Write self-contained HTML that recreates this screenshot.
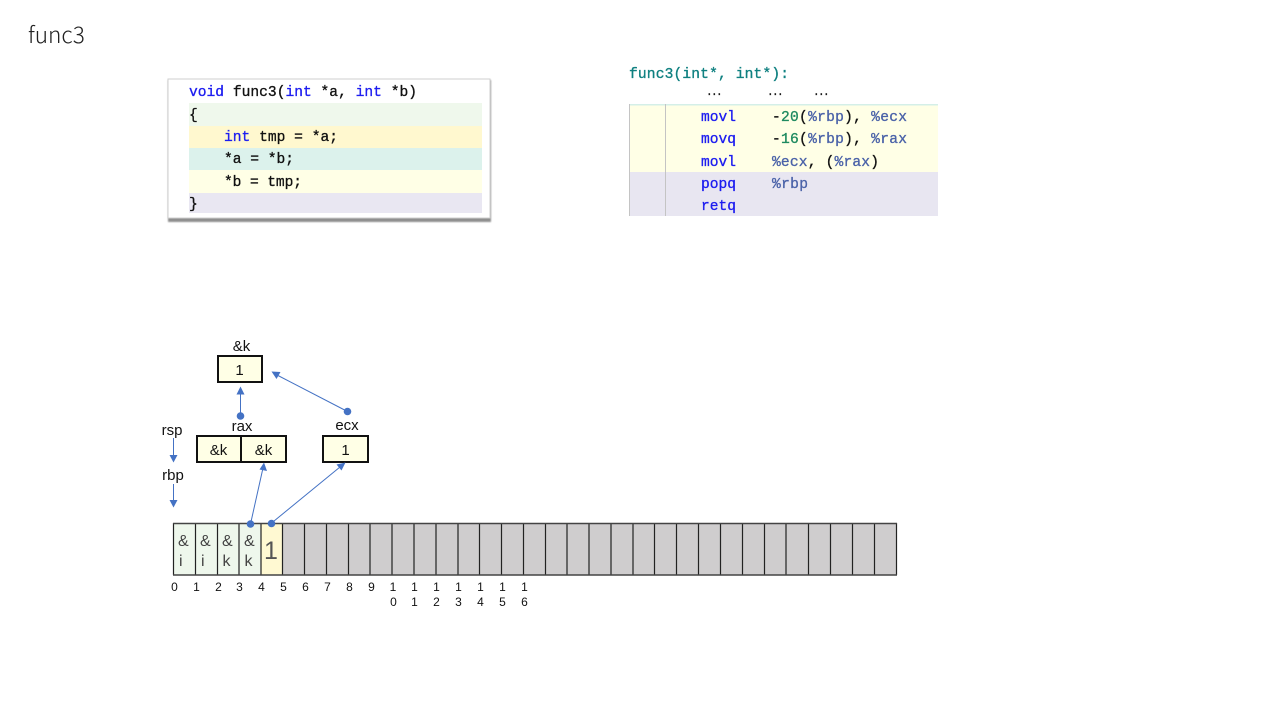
<!DOCTYPE html>
<html lang="en"><head><meta charset="utf-8"><title>func3</title>
<style>
html,body{margin:0;padding:0;background:#fff;width:1280px;height:720px;overflow:hidden}
svg{position:absolute;left:0;top:0;display:block}
.m{font-family:"Liberation Mono","DejaVu Sans Mono",monospace;font-size:14.6px;font-weight:400;stroke-width:.32;white-space:pre;filter:blur(.35px)}
.k{fill:#111;stroke:#111}
.b{fill:#1c1cf0;stroke:#1c1cf0}
.r{fill:#4a62a8;stroke:#4a62a8}
.g{fill:#1f8a60;stroke:#1f8a60}
.t{fill:#0f8080;stroke:#0f8080}
.s{font-family:"Liberation Sans","Noto Sans CJK SC",sans-serif;fill:#111}
.c{font-family:"Liberation Sans",sans-serif;fill:#444;font-size:16px}
.n{font-family:"Liberation Sans",sans-serif;fill:#111;font-size:12px;text-anchor:middle}
.l{font-size:15px;text-anchor:middle}
.a{stroke:#4472c4;stroke-width:1;fill:none}
.h{fill:#4472c4}
</style></head><body>
<svg width="1280" height="720" viewBox="0 0 1280 720" xmlns="http://www.w3.org/2000/svg">
<text x="28" y="43" style="font-family:'Noto Sans CJK SC','Liberation Sans',sans-serif;font-size:22.6px;font-weight:300;fill:#222">func3</text>

<!-- C code panel -->
<rect x="168" y="80" width="323" height="142" fill="#8f8f8f" style="filter:blur(.9px)"/>
<rect x="168" y="79" width="322" height="139" fill="#fff" stroke="#cfcfcf" stroke-width="1"/>
<rect x="189" y="103" width="293" height="23" fill="#eff8ec"/>
<rect x="189" y="126" width="293" height="22" fill="#fff8cf"/>
<rect x="189" y="148" width="293" height="22" fill="#dcf2ec"/>
<rect x="189" y="170" width="293" height="23" fill="#ffffe6"/>
<rect x="189" y="193" width="293" height="20" fill="#e9e7f2"/>
<g class="m">
<text y="96" textLength="228" x="189"><tspan class="b">void</tspan><tspan class="k"> func3(</tspan><tspan class="b">int</tspan><tspan class="k"> *a, </tspan><tspan class="b">int</tspan><tspan class="k"> *b)</tspan></text>
<text y="119" x="189" class="k">{</text>
<text y="141" x="224" textLength="114"><tspan class="b">int</tspan><tspan class="k"> tmp = *a;</tspan></text>
<text y="163" x="224" class="k" textLength="70">*a = *b;</text>
<text y="186" x="224" class="k" textLength="78">*b = tmp;</text>
<text y="208" x="189" class="k">}</text>
</g>

<!-- asm panel -->
<rect x="629" y="104" width="309" height="68" fill="#ffffe6"/>
<rect x="629" y="172" width="309" height="44" fill="#e8e6f1"/>
<rect x="629" y="104" width="309" height="1.5" fill="#d4efe8"/>
<rect x="629" y="104" width="1" height="112" fill="#c4c4c4"/>
<rect x="665" y="104" width="1" height="112" fill="#c4c4c4"/>
<g class="m">
<text x="629" y="78" class="t" textLength="160">func3(int*, int*):</text>
<text x="706 711 716" y="95" class="k" style="font-size:11px">...</text>
<text x="767 772 777" y="95" class="k" style="font-size:11px">...</text>
<text x="813 818 823" y="95" class="k" style="font-size:11px">...</text>
<text x="701" y="121" class="b" textLength="35">movl</text>
<text x="701" y="143" class="b" textLength="35">movq</text>
<text x="701" y="166" class="b" textLength="35">movl</text>
<text x="701" y="188" class="b" textLength="35">popq</text>
<text x="701" y="210" class="b" textLength="35">retq</text>
<text x="772" y="121" textLength="135"><tspan class="k">-</tspan><tspan class="g">20</tspan><tspan class="k">(</tspan><tspan class="r">%rbp</tspan><tspan class="k">), </tspan><tspan class="r">%ecx</tspan></text>
<text x="772" y="143" textLength="135"><tspan class="k">-</tspan><tspan class="g">16</tspan><tspan class="k">(</tspan><tspan class="r">%rbp</tspan><tspan class="k">), </tspan><tspan class="r">%rax</tspan></text>
<text x="772" y="166" textLength="107"><tspan class="r">%ecx</tspan><tspan class="k">, (</tspan><tspan class="r">%rax</tspan><tspan class="k">)</tspan></text>
<text x="772" y="188" class="r" textLength="36">%rbp</text>
</g>

<!-- memory strip -->
<rect x="173" y="523" width="88" height="52" fill="#eef7ec"/>
<rect x="261" y="523" width="21.5" height="52" fill="#fff9d2"/>
<rect x="282.5" y="523" width="614.5" height="52" fill="#cfcdce"/>
<g stroke="#222" stroke-width="1.200">
<path d="M173.500 523V575M195.500 523V575M217.500 523V575M239 523V575M261 523V575M282.500 523V575M304.500 523V575M326.500 523V575M348.500 523V575M370 523V575M392 523V575M414 523V575M436 523V575M458 523V575M479.500 523V575M501.500 523V575M523.500 523V575M545.500 523V575M567 523V575M589 523V575M611 523V575M633 523V575M654.500 523V575M676.500 523V575M698.500 523V575M720.500 523V575M742.500 523V575M764.500 523V575M786 523V575M808.500 523V575M830.500 523V575M852.500 523V575M874.500 523V575M896.500 523V575"/>
<path d="M173 523.500H897M173 575H897" stroke="#444" stroke-width="1.400"/>
</g>
<text class="c" x="178" y="546">&amp;</text><text class="c" x="179" y="566">i</text>
<text class="c" x="200" y="546">&amp;</text><text class="c" x="201" y="566">i</text>
<text class="c" x="222" y="546">&amp;</text><text class="c" x="222.500" y="566">k</text>
<text class="c" x="244" y="546">&amp;</text><text class="c" x="244.500" y="566">k</text>
<text class="c" x="264" y="559" style="font-size:25px;fill:#555">1</text>

<!-- index labels -->
<text class="n" x="174.500" y="591">0</text><text class="n" x="196.500" y="591">1</text><text class="n" x="218.500" y="591">2</text><text class="n" x="239.500" y="591">3</text><text class="n" x="261.500" y="591">4</text><text class="n" x="283.500" y="591">5</text><text class="n" x="305.500" y="591">6</text><text class="n" x="327.500" y="591">7</text><text class="n" x="349.500" y="591">8</text><text class="n" x="371.500" y="591">9</text>
<text class="n" x="393" y="591">1</text><text class="n" x="393.500" y="606">0</text>
<text class="n" x="414.500" y="591">1</text><text class="n" x="414.500" y="606">1</text>
<text class="n" x="436.500" y="591">1</text><text class="n" x="436.500" y="606">2</text>
<text class="n" x="458.500" y="591">1</text><text class="n" x="458.500" y="606">3</text>
<text class="n" x="480.500" y="591">1</text><text class="n" x="480.500" y="606">4</text>
<text class="n" x="502.500" y="591">1</text><text class="n" x="502.500" y="606">5</text>
<text class="n" x="524.500" y="591">1</text><text class="n" x="524.500" y="606">6</text>

<!-- register boxes -->
<g fill="#ffffe6" stroke="#111" stroke-width="2">
<rect x="218" y="356" width="44" height="26"/>
<rect x="197" y="436" width="44.500" height="26"/>
<rect x="241" y="436" width="45" height="26"/>
<rect x="323" y="436" width="45" height="26"/>
</g>
<g class="s l">
<text x="241.500" y="351">&amp;k</text>
<text x="239.500" y="375">1</text>
<text x="242" y="431">rax</text>
<text x="347" y="430">ecx</text>
<text x="218.500" y="455">&amp;k</text>
<text x="263.500" y="455">&amp;k</text>
<text x="345.500" y="455">1</text>
<text x="172" y="435">rsp</text>
<text x="173" y="480">rbp</text>
</g>

<!-- arrows -->
<path class="a" d="M240.500 416V393M347.500 411.500L277 375M173.500 438V456M173.500 484V501M250.500 524L263 468M271 523.500L340 467"/>
<circle class="h" cx="240.500" cy="416" r="3.800"/>
<circle class="h" cx="347.500" cy="411.500" r="3.800"/>
<circle class="h" cx="250.500" cy="524" r="3.800"/>
<circle class="h" cx="271.500" cy="523.500" r="3.800"/>
<path class="h" d="M240.500 386.500L244.500 394.500H236.500Z"/>
<path class="h" d="M271.500 371.500L280.500 372L276.500 379Z"/>
<path class="h" d="M173.500 462.500L169.500 455H177.500Z"/>
<path class="h" d="M173.500 507.500L169.500 500H177.500Z"/>
<path class="h" d="M264 462.500L267 471L259.500 469.500Z"/>
<path class="h" d="M345.500 462.500L341.500 470.500L336.500 464.500Z"/>
</svg>
</body></html>
